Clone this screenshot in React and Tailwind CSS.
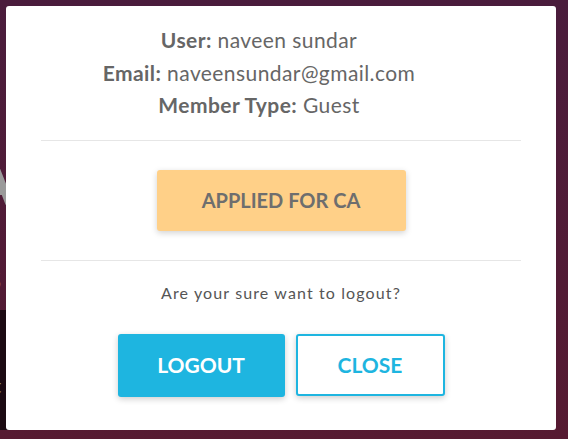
export default function App() {
  return (
    <div className="relative w-[568px] h-[439px] overflow-hidden bg-gradient-to-b from-[#4a1c3c] to-[#561a31] font-['Lato','Open_Sans',sans-serif]">
      {/* page behind the modal */}
      <div className="flex flex-col h-full">
        <div className="h-[150px]" />
        <p className="text-[64px] font-bold leading-none text-[#9a9a9a] -ml-[30px] h-[60px]">AV</p>
        <div className="h-[48px]" />
        <p className="text-[36px] leading-none text-[#9a8a90] -ml-[14px] h-[52px]">s</p>
        <div className="w-[300px] h-[120px] bg-[#1b0a12] flex items-center pt-[30px]">
          <p className="text-[20px] text-[#8a8a8a] -ml-[6px]">t</p>
        </div>
      </div>

      {/* modal */}
      <div className="absolute left-[6px] top-[6px] w-[550px] h-[424px] bg-white rounded-[3px] flex flex-col items-center text-[#666]">
        <div className="pt-[18px] pr-[44px] flex flex-col items-center text-[21px] leading-[32.5px] tracking-[0.02em]">
          <p>
            <span className="font-bold">User:</span> naveen sundar
          </p>
          <p>
            <span className="font-bold">Email:</span> naveensundar@gmail.com
          </p>
          <p>
            <span className="font-bold">Member Type:</span> Guest
          </p>
        </div>

        <div className="mt-[18px] w-[480px] h-px bg-[#e6e6e6]" />

        <button className="mt-[29px] w-[249px] h-[61px] rounded-[3px] bg-[#ffd088] text-[#6e6e6e] text-[20px] font-bold uppercase shadow-[0_2px_6px_rgba(0,0,0,0.18)]">
          Applied for CA
        </button>

        <div className="mt-[29px] w-[480px] h-px bg-[#e6e6e6]" />

        <p className="mt-[20px] text-[16px] tracking-[0.07em] text-[#555]">Are your sure want to logout?</p>

        <div className="mt-[29px] flex gap-[11px]">
          <button className="w-[167px] h-[63px] rounded-[3px] bg-[#1eb5e0] text-white text-[21px] font-bold uppercase shadow-[0_2px_6px_rgba(0,0,0,0.2)]">
            Logout
          </button>
          <button className="w-[149px] h-[62px] rounded-[3px] bg-white border-2 border-[#1eb5e0] text-[#1eb5e0] text-[21px] font-bold uppercase shadow-[0_2px_6px_rgba(0,0,0,0.2)]">
            Close
          </button>
        </div>
      </div>
    </div>
  )
}
